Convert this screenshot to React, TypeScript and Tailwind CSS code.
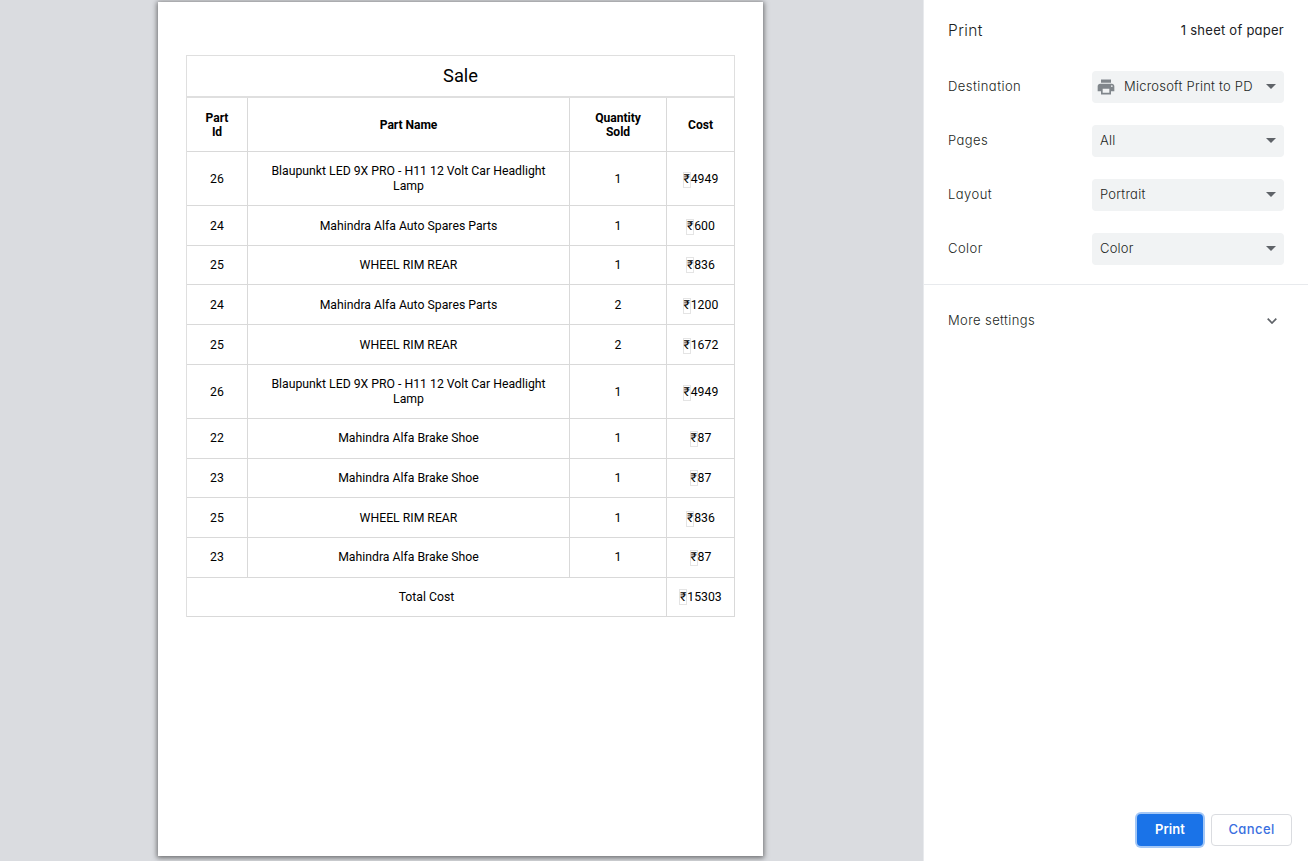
import type { ReactNode } from "react";

type Row = { id: string; name: string; qty: string; cost: string; height: string };

const rows: Row[] = [
  { id: "26", name: "Blaupunkt LED 9X PRO - H11 12 Volt Car Headlight Lamp", qty: "1", cost: "4949", height: "h-[54px]" },
  { id: "24", name: "Mahindra Alfa Auto Spares Parts", qty: "1", cost: "600", height: "h-[40px]" },
  { id: "25", name: "WHEEL RIM REAR", qty: "1", cost: "836", height: "h-[39px] *:pb-0.5" },
  { id: "24", name: "Mahindra Alfa Auto Spares Parts", qty: "2", cost: "1200", height: "h-[40px]" },
  { id: "25", name: "WHEEL RIM REAR", qty: "2", cost: "1672", height: "h-[40px]" },
  { id: "26", name: "Blaupunkt LED 9X PRO - H11 12 Volt Car Headlight Lamp", qty: "1", cost: "4949", height: "h-[54px]" },
  { id: "22", name: "Mahindra Alfa Brake Shoe", qty: "1", cost: "87", height: "h-[40px] *:pb-0.5" },
  { id: "23", name: "Mahindra Alfa Brake Shoe", qty: "1", cost: "87", height: "h-[39px] *:pb-0.5" },
  { id: "25", name: "WHEEL RIM REAR", qty: "1", cost: "836", height: "h-[40px]" },
  { id: "23", name: "Mahindra Alfa Brake Shoe", qty: "1", cost: "87", height: "h-[40px] *:pb-0.5" },
];

const headCell = "border-b border-r border-[#d9d9d9] text-center align-middle";
const cell = "border-b border-r border-[#d9d9d9] pt-0.5 text-center align-middle";

function Price({ amount }: { amount: string }) {
  return (
    <span className="inline-flex items-center">
      <span className="flex h-4 w-2 items-center justify-center border border-[#e4e4e4]">₹</span>
      {amount}
    </span>
  );
}

function SaleTable() {
  return (
    <table className="w-[549px] table-fixed border-separate border-spacing-0 border-l border-t border-[#dfdfdf] text-[12.25px] leading-[15px] text-black">
      <colgroup>
        <col className="w-[61px]" />
        <col className="w-[322px]" />
        <col className="w-[97px]" />
        <col className="w-[68px]" />
      </colgroup>
      <tbody>
        <tr className="h-[42px]">
          <td colSpan={4} className="border-b-2 border-r border-[#dfdfdf] pb-0.5 text-center align-middle text-[18.3px]">
            Sale
          </td>
        </tr>
        <tr className="h-[54px] text-[12.1px] font-bold leading-[14px] tracking-[-0.05px]">
          <td className={headCell}>Part<br />Id</td>
          <td className={headCell}>Part Name</td>
          <td className={headCell}>Quantity<br />Sold</td>
          <td className={headCell}>Cost</td>
        </tr>
        {rows.map((row, i) => (
          <tr key={i} className={row.height}>
            <td className={cell}>{row.id}</td>
            <td className={cell}>
              <div className={row.name.length > 40 ? "px-5 pb-0.5" : "px-5"}>{row.name}</div>
            </td>
            <td className={cell}>{row.qty}</td>
            <td className={cell}><Price amount={row.cost} /></td>
          </tr>
        ))}
        <tr className="h-[39px] *:pb-0.5">
          <td colSpan={3} className={cell}>Total Cost</td>
          <td className={cell}><Price amount="15303" /></td>
        </tr>
      </tbody>
    </table>
  );
}

function PrinterIcon() {
  return (
    <svg className="h-5 w-5 shrink-0" viewBox="0 0 24 24" fill="#80868b">
      <path d="M19 8H5c-1.66 0-3 1.34-3 3v6h4v4h12v-4h4v-6c0-1.66-1.34-3-3-3zm-3 11H8v-5h8v5zm3-7c-.55 0-1-.45-1-1s.45-1 1-1 1 .45 1 1-.45 1-1 1zm-1-9H6v4h12V3z" />
    </svg>
  );
}

function Setting({ label, value, icon }: { label: string; value: string; icon?: ReactNode }) {
  return (
    <div className="flex h-[54px] items-center justify-between px-6">
      <span className="tracking-[0.45px]">{label}</span>
      <div className={`flex h-8 w-48 items-center rounded bg-[#f1f3f4] pr-2 ${icon ? "gap-2 pl-1" : "pl-2"}`}>
        {icon}
        <span className="flex-1 whitespace-nowrap">{value}</span>
        <svg className="mb-px h-[5px] w-[10px] shrink-0" viewBox="0 0 10 5" fill="#5f6368">
          <path d="M0 0h10L5 5z" />
        </svg>
      </div>
    </div>
  );
}

export default function App() {
  return (
    <div className="flex h-[861px] w-[1308px] overflow-hidden bg-[#dadce0]">
      <main className="w-[923px] pl-[158px] pt-[2px] font-[Roboto,sans-serif]">
        <section className="h-[854px] w-[605px] bg-white pl-7 pt-[53px] shadow-[0_1px_5px_1px_rgba(0,0,0,0.5)]">
          <SaleTable />
        </section>
      </main>
      <aside className="flex w-[385px] flex-col border-l border-[#e8eaed] bg-white font-[Inter,sans-serif] text-[13px] font-light tracking-[0.22px] text-[#1c1f23] [font-feature-settings:'cv11']">
        <header className="flex h-[60px] items-center justify-between px-6 pt-0.5">
          <h1 className="text-[15.5px] tracking-[0.4px]">Print</h1>
          <span className="font-normal tracking-[0.25px] text-[#202124]">1 sheet of paper</span>
        </header>
        <Setting label="Destination" value="Microsoft Print to PD" icon={<PrinterIcon />} />
        <Setting label="Pages" value="All" />
        <Setting label="Layout" value="Portrait" />
        <Setting label="Color" value="Color" />
        <div className="mt-2 border-t border-[#e8eaed]" />
        <div className="flex h-[72px] items-center justify-between pl-6 pr-[31px]">
          <span className="tracking-[0.4px]">More settings</span>
          <svg className="h-[6px] w-[10px]" viewBox="0 0 10 6" fill="none" stroke="#5f6368" strokeWidth="1.7">
            <path d="M.7.7 5 5 9.300.7" />
          </svg>
        </div>
        <footer className="mb-[15px] mr-4 mt-auto flex justify-end gap-2 font-medium">
          <button className="h-8 w-[66px] rounded bg-[#1a73e8] font-semibold tracking-[0.1px] text-white ring-2 ring-[#a3c7f6]">Print</button>
          <button className="h-8 w-[81px] rounded border border-[#dadce0] tracking-[0.4px] text-[#3a6fe0]">Cancel</button>
        </footer>
      </aside>
    </div>
  );
}
